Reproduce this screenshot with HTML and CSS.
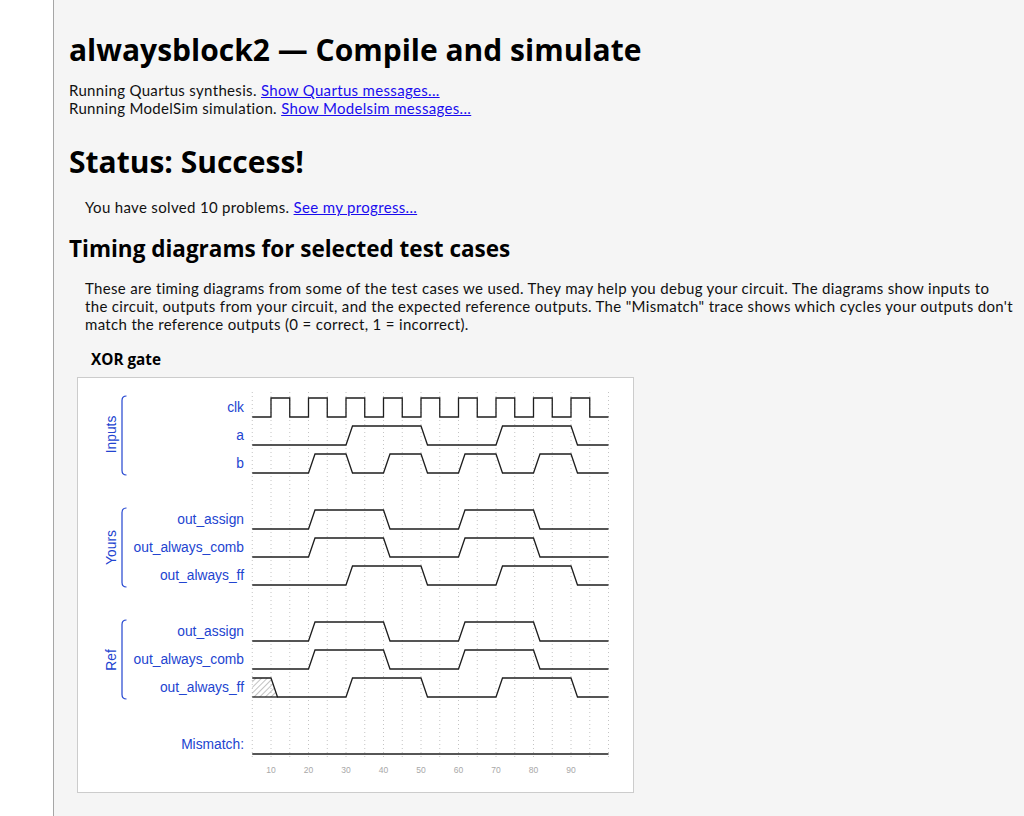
FILE: index.html
```html
<!DOCTYPE html>
<html lang="en">
<head>
<meta charset="utf-8">
<title>alwaysblock2 — Compile and simulate</title>
<link rel="stylesheet" href="styles.css">
</head>
<body>
<div class="page">
  <div class="gutter"></div>
  <main class="content">
    <h1 class="title">alwaysblock2 — Compile and simulate</h1>
    <div class="log">
      <div>Running Quartus synthesis. <a href="#">Show Quartus messages...</a></div>
      <div>Running ModelSim simulation. <a href="#">Show Modelsim messages...</a></div>
    </div>
    <h2 class="status">Status: Success!</h2>
    <p class="indent solved">You have solved 10 problems. <a href="#">See my progress...</a></p>
    <h3 class="section">Timing diagrams for selected test cases</h3>
    <p class="indent desc">These are timing diagrams from some of the test cases we used. They may help you debug your circuit. The diagrams show inputs to the circuit, outputs from your circuit, and the expected reference outputs. The "Mismatch" trace shows which cycles your outputs don't match the reference outputs (0 = correct, 1 = incorrect).</p>
    <div class="case">
      <h4 class="case-title">XOR gate</h4>
      <div class="wavebox">
        <svg class="wave" width="555" height="414" viewBox="78 378 555 414" xmlns="http://www.w3.org/2000/svg">
          <defs>
            <pattern id="hatch" width="4" height="4" patternUnits="userSpaceOnUse" patternTransform="rotate(45)">
              <line x1="0" y1="0" x2="0" y2="4" stroke="#666" stroke-width="0.8"/>
            </pattern>
          </defs>
          <g class="grid" stroke="#c4c4c4" stroke-width="1" stroke-dasharray="1 3">
            <line x1="252.25" y1="392" x2="252.25" y2="760"/>
            <line x1="271" y1="392" x2="271" y2="760"/>
            <line x1="289.75" y1="392" x2="289.75" y2="760"/>
            <line x1="308.5" y1="392" x2="308.5" y2="760"/>
            <line x1="327.25" y1="392" x2="327.25" y2="760"/>
            <line x1="346" y1="392" x2="346" y2="760"/>
            <line x1="364.75" y1="392" x2="364.75" y2="760"/>
            <line x1="383.5" y1="392" x2="383.5" y2="760"/>
            <line x1="402.25" y1="392" x2="402.25" y2="760"/>
            <line x1="421" y1="392" x2="421" y2="760"/>
            <line x1="439.75" y1="392" x2="439.75" y2="760"/>
            <line x1="458.5" y1="392" x2="458.5" y2="760"/>
            <line x1="477.25" y1="392" x2="477.25" y2="760"/>
            <line x1="496" y1="392" x2="496" y2="760"/>
            <line x1="514.75" y1="392" x2="514.75" y2="760"/>
            <line x1="533.5" y1="392" x2="533.5" y2="760"/>
            <line x1="552.25" y1="392" x2="552.25" y2="760"/>
            <line x1="571" y1="392" x2="571" y2="760"/>
            <line x1="589.75" y1="392" x2="589.75" y2="760"/>
            <line x1="608.5" y1="392" x2="608.5" y2="760"/>
          </g>

          <g class="groups" fill="none" stroke="#2244d0" stroke-width="1.2">
            <path d="M126.5 396 Q122 396 122 400.5 V470.5 Q122 475 126.5 475"/>
            <path d="M126.5 508 Q122 508 122 512.5 V582.5 Q122 587 126.5 587"/>
            <path d="M126.5 620 Q122 620 122 624.5 V694.5 Q122 699 126.5 699"/>
          </g>
          <g class="group-labels" fill="#2244d0" font-family="'Liberation Sans', Arial, sans-serif" font-size="13.8" text-anchor="middle">
            <text transform="translate(116 434.5) rotate(-90)">Inputs</text>
            <text transform="translate(116 547.5) rotate(-90)">Yours</text>
            <text transform="translate(116 660) rotate(-90)">Ref</text>
          </g>

          <g class="labels" fill="#2244d0" font-family="'Liberation Sans', Arial, sans-serif" font-size="13.8" text-anchor="end">
            <text x="244" y="412">clk</text>
            <text x="244" y="440">a</text>
            <text x="244" y="468">b</text>
            <text x="244" y="524">out_assign</text>
            <text x="244" y="552">out_always_comb</text>
            <text x="244" y="580">out_always_ff</text>
            <text x="244" y="636">out_assign</text>
            <text x="244" y="664">out_always_comb</text>
            <text x="244" y="692">out_always_ff</text>
            <text x="244" y="749">Mismatch:</text>
          </g>

          <polygon points="252.25,678 271,678 277.5,697 252.25,697" fill="url(#hatch)"/>

          <g class="traces" fill="none" stroke="#1e1e1e" stroke-width="1.3">
            <path d="M252.25 417 H271 V398 H289.75 V417 H308.5 V398 H327.25 V417 H346 V398 H364.75 V417 H383.5 V398 H402.25 V417 H421 V398 H439.75 V417 H458.5 V398 H477.25 V417 H496 V398 H514.75 V417 H533.5 V398 H552.25 V417 H571 V398 H589.75 V417 H608.5"/>
            <path d="M252.25 445 H346 L352.5 426 H421 L427.5 445 H496 L502.5 426 H571 L577.5 445 H608.5"/>
            <path d="M252.25 473 H308.5 L315 454 H346 L352.5 473 H383.5 L390 454 H421 L427.5 473 H458.5 L465 454 H496 L502.5 473 H533.5 L540 454 H571 L577.5 473 H608.5"/>
            <path d="M252.25 529 H308.5 L315 510 H383.5 L390 529 H458.5 L465 510 H533.5 L540 529 H608.5"/>
            <path d="M252.25 557 H308.5 L315 538 H383.5 L390 557 H458.5 L465 538 H533.5 L540 557 H608.5"/>
            <path d="M252.25 585 H346 L352.5 566 H421 L427.5 585 H496 L502.5 566 H571 L577.5 585 H608.5"/>
            <path d="M252.25 641 H308.5 L315 622 H383.5 L390 641 H458.5 L465 622 H533.5 L540 641 H608.5"/>
            <path d="M252.25 669 H308.5 L315 650 H383.5 L390 669 H458.5 L465 650 H533.5 L540 669 H608.5"/>
            <path d="M252.25 678 H271 L277.5 697 H346 L352.5 678 H421 L427.5 697 H496 L502.5 678 H571 L577.5 697 H608.5"/>
            <path d="M252.25 697 H277.5"/>
            <path d="M252.25 754 H608.5"/>
          </g>

          <g class="axis" fill="#a8a8a8" font-family="'Liberation Sans', Arial, sans-serif" font-size="8.5" text-anchor="middle">
            <text x="271" y="773">10</text>
            <text x="308.5" y="773">20</text>
            <text x="346" y="773">30</text>
            <text x="383.5" y="773">40</text>
            <text x="421" y="773">50</text>
            <text x="458.5" y="773">60</text>
            <text x="496" y="773">70</text>
            <text x="533.5" y="773">80</text>
            <text x="571" y="773">90</text>
          </g>
        </svg>
      </div>
    </div>
  </main>
</div>
</body>
</html>
```

FILE: styles.css
```css
html, body {
  margin: 0;
  padding: 0;
}

body {
  background: #f5f5f5;
  color: #111;
  font-family: "Lato", "Open Sans", sans-serif;
  font-size: 15px;
  line-height: 18px;
  letter-spacing: 0.33px;
}

.page {
  display: flex;
  min-height: 816px;
}

.gutter {
  flex: 0 0 53px;
  background: #ffffff;
  border-right: 1px solid #a6a6a6;
}

.content {
  flex: 1 1 auto;
  padding: 0 10px 0 15px;
  background: #f5f5f5;
}

a {
  color: #1a0dee;
  text-decoration: underline;
}

.title,
.status {
  font-family: "Open Sans", sans-serif;
  font-weight: 700;
  font-size: 30px;
  line-height: 40px;
  letter-spacing: 0;
  margin: 0;
  color: #000;
}

.title {
  margin-top: 30px;
}

.log {
  margin-top: 11px;
}

.status {
  margin-top: 25px;
}

.indent {
  margin: 0;
  padding-left: 16px;
}

.solved {
  margin-top: 16px;
}

.section {
  font-family: "Open Sans", sans-serif;
  font-weight: 700;
  font-size: 22.5px;
  line-height: 30px;
  letter-spacing: 0;
  margin: 18px 0 0 0;
  color: #000;
}

.desc {
  margin-top: 15px;
}

.case {
  margin-top: 16px;
  padding-left: 8px;
}

.case-title {
  font-family: "Open Sans", sans-serif;
  font-weight: 700;
  font-size: 15.3px;
  line-height: 20px;
  letter-spacing: 0;
  margin: 0 0 8px 14px;
  color: #000;
}

.wavebox {
  display: inline-block;
  background: #ffffff;
  border: 1px solid #cccccc;
  line-height: 0;
  letter-spacing: 0;
}

.wave {
  display: block;
}
```
